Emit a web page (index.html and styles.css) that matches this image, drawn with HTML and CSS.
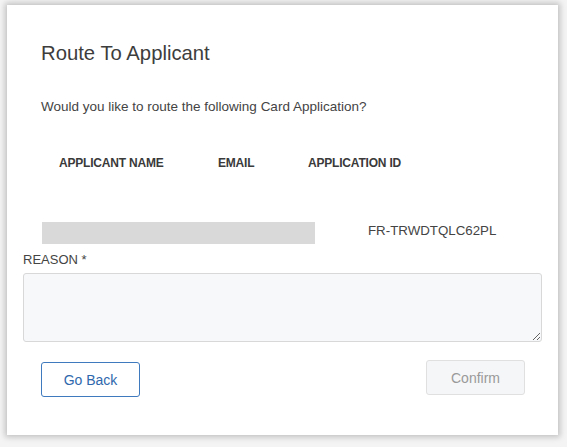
FILE: index.html
```html
<!DOCTYPE html>
<html>
<head>
<meta charset="utf-8">
<link rel="stylesheet" href="styles.css">
</head>
<body>
<div class="modal">
  <h1 class="title">Route To Applicant</h1>
  <p class="question">Would you like to route the following Card Application?</p>
  <div class="headers">
    <span class="h-name">APPLICANT NAME</span>
    <span class="h-email">EMAIL</span>
    <span class="h-id">APPLICATION ID</span>
  </div>
  <div class="values">
    <div class="redacted"></div>
    <span class="app-id">FR-TRWDTQLC62PL</span>
  </div>
  <label class="reason-label">REASON *</label>
  <textarea class="reason"></textarea>
  <div class="actions">
    <button class="btn btn-back">Go Back</button>
    <button class="btn btn-confirm" disabled>Confirm</button>
  </div>
</div>
</body>
</html>
```

FILE: styles.css
```css
* { box-sizing: border-box; }
html, body { margin: 0; padding: 0; }
body {
  width: 567px;
  height: 447px;
  background: #f4f4f4;
  font-family: "Liberation Sans", Arial, sans-serif;
  color: #444;
  padding: 5px 9px 12px 7px;
}
.modal {
  background: #fff;
  width: 551px;
  height: 430px;
  box-shadow: 0 0 6px 2px rgba(0,0,0,0.22);
  padding: 36px 16px 0 16px;
  display: flex;
  flex-direction: column;
}
.title {
  margin: 0 0 0 18px;
  font-size: 20.3px;
  font-weight: normal;
  color: #3d3d3d;
  line-height: 24px;
}
.question {
  margin: 33px 0 0 18px;
  font-size: 13.5px;
  line-height: 18px;
  color: #444;
}
.headers {
  display: flex;
  margin: 39px 0 0 36px;
  font-size: 12px;
  font-weight: bold;
  color: #3a3a3a;
  line-height: 16px;
  letter-spacing: -0.2px;
}
.h-name { width: 159px; }
.h-email { width: 90px; }
.values {
  display: flex;
  align-items: center;
  margin: 51px 0 0 19px;
  height: 22px;
}
.redacted {
  width: 273px;
  height: 22px;
  background: #d9d9d9;
}
.app-id {
  margin-left: 53px;
  font-size: 13.3px;
  color: #444;
  position: relative;
  top: -3px;
}
.reason-label {
  margin-top: 7px;
  font-size: 13px;
  line-height: 18px;
  color: #444;
}
.reason {
  margin-top: 4px;
  width: 519px;
  height: 69px;
  background: #f7f8f9;
  border: 1px solid #d8d8d8;
  border-radius: 3px;
  resize: vertical;
  font-family: inherit;
}
.actions {
  display: flex;
  justify-content: space-between;
  align-items: flex-start;
  margin: 18px 17px 0 18px;
}
.btn {
  font-family: inherit;
  font-size: 14px;
  width: 99px;
  height: 35px;
  border-radius: 3px;
  background: #fff;
}
.btn-back {
  margin-top: 2px;
  border: 1px solid #3f79be;
  color: #2f68ad;
}
.btn-confirm {
  background: #f5f6f7;
  border: 1px solid #e0e0e0;
  color: #9a9a9a;
}
```
